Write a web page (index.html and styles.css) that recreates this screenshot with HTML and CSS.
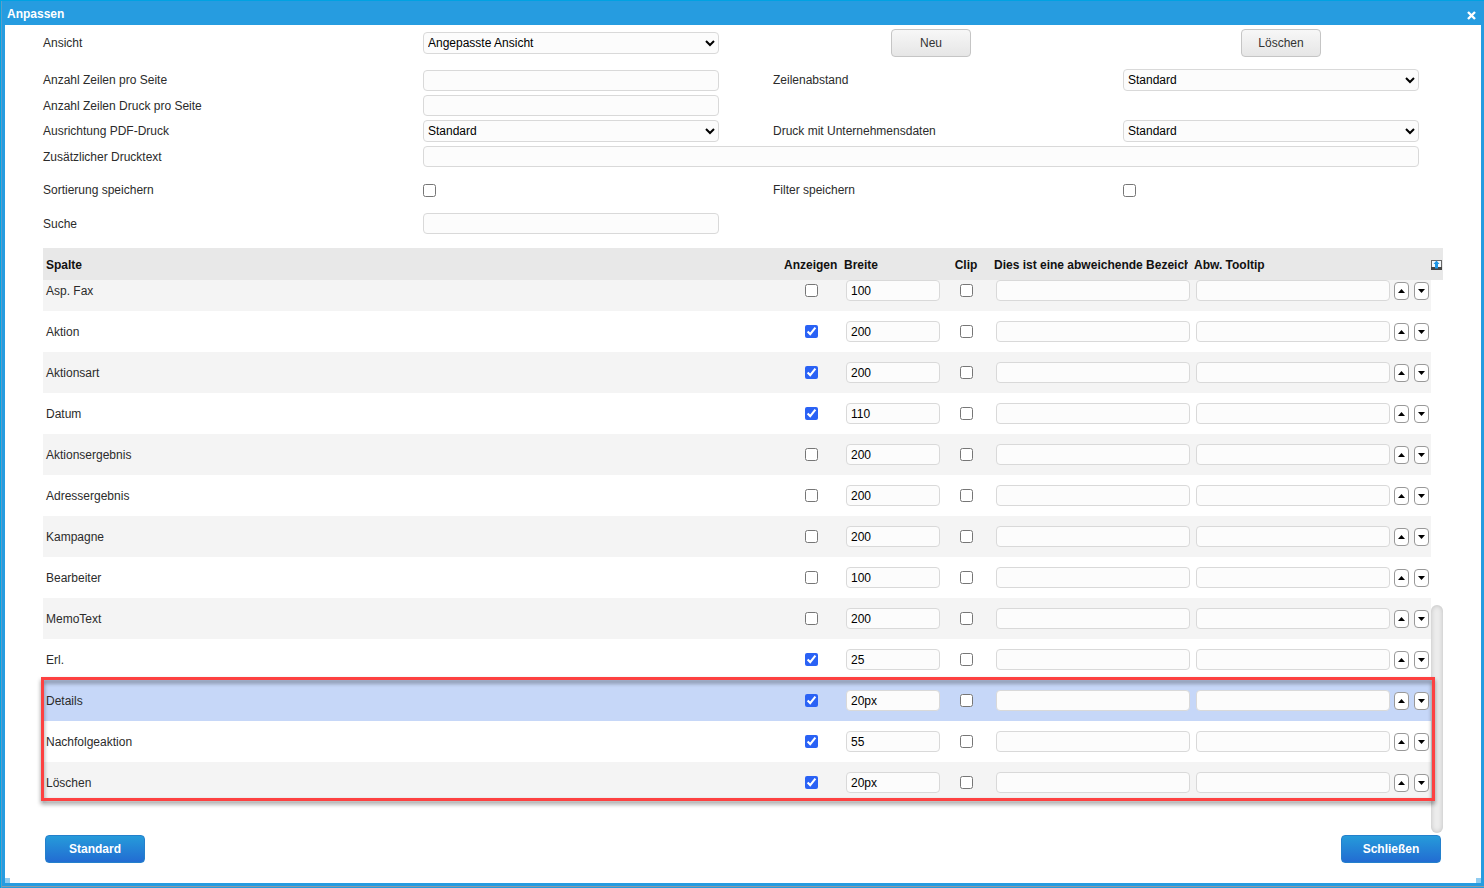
FILE: index.html
```
<!DOCTYPE html>
<html lang="de">
<head>
    <meta charset="UTF-8">
    <meta name="viewport" content="width=device-width, initial-scale=1.0">
    <title>Anpassen</title>
    <link rel="stylesheet" href="styles.css">
</head>
<body>

    <div class="dialog">
        <header class="dialog-title">
            <h1>Anpassen</h1>
            <button type="button" class="close-btn" aria-label="Fenster schließen">
                <svg width="9" height="9" viewBox="0 0 9 9"><path d="M1 1l7 7M8 1L1 8" stroke="#fff" stroke-width="2.4"/></svg>
            </button>
        </header>

        <main class="dialog-body">
            <form class="settings">
                <div class="group">
                    <label for="view">Ansicht</label>
                    <select id="view"><option>Angepasste Ansicht</option></select>
                    <div class="btn-cell"><button type="button" class="btn">Neu</button></div>
                    <div class="btn-cell"><button type="button" class="btn">Löschen</button></div>
                </div>

                <div class="group">
                    <label for="rows">Anzahl Zeilen pro Seite</label>
                    <input type="text" id="rows">
                    <label for="spacing">Zeilenabstand</label>
                    <select id="spacing"><option>Standard</option></select>

                    <label for="print-rows">Anzahl Zeilen Druck pro Seite</label>
                    <input type="text" id="print-rows">

                    <label for="orientation" class="first">Ausrichtung PDF-Druck</label>
                    <select id="orientation"><option>Standard</option></select>
                    <label for="company">Druck mit Unternehmensdaten</label>
                    <select id="company"><option>Standard</option></select>

                    <label for="print-text">Zusätzlicher Drucktext</label>
                    <input type="text" id="print-text" class="wide">
                </div>

                <div class="group checks">
                    <label for="save-sort">Sortierung speichern</label>
                    <input type="checkbox" id="save-sort">
                    <label for="save-filter">Filter speichern</label>
                    <input type="checkbox" id="save-filter">
                </div>

                <div class="group">
                    <label for="search">Suche</label>
                    <input type="text" id="search">
                </div>
            </form>

            <section class="list">
                <div class="list-scroll" id="list-scroll">
                    <table>
                        <colgroup>
                            <col>
                            <col class="col-show">
                            <col class="col-width">
                            <col class="col-clip">
                            <col class="col-text">
                            <col class="col-text">
                            <col class="col-move">
                            <col class="col-bar">
                        </colgroup>
                        <thead>
                            <tr>
                                <th><span>Spalte</span></th>
                                <th><span>Anzeigen</span></th>
                                <th><span>Breite</span></th>
                                <th class="center"><span>Clip</span></th>
                                <th><span>Dies ist eine abweichende Bezeichnung</span></th>
                                <th><span>Abw. Tooltip</span></th>
                                <th></th>
                                <th class="bar-head">
                                    <svg width="11" height="10" viewBox="0 0 11 10">
                                        <rect x="0.5" y="0.5" width="10" height="9" fill="#f4f8fb" stroke="#666"/>
                                        <rect x="0" y="7" width="11" height="3" fill="#444"/>
                                        <path d="M5.5 0.5L8.5 4H7V8.5H4V4H2.5Z" fill="#1e96e6"/>
                                    </svg>
                                </th>
                            </tr>
                        </thead>
                        <tbody id="columns"></tbody>
                    </table>
                </div>
                <div class="scroll-thumb"></div>
                <div class="marker"></div>
            </section>

            <footer class="actions">
                <button type="button" class="btn primary">Standard</button>
                <button type="button" class="btn primary">Schließen</button>
            </footer>
        </main>
    </div>

    <script src="script.js"></script>
</body>
</html>
```
FILE: styles.css
```
* {
    box-sizing: border-box;
}
body {
    margin: 0;
    font-family: "Liberation Sans", Arial, sans-serif;
    font-size: 12px;
    color: #2b2b2b;
}
button, input, select {
    font-family: inherit;
    font-size: 12px;
}
.dialog {
    display: flex;
    flex-direction: column;
    height: 100vh;
    padding: 0 3px 5px 5px;
    background-color: #269ce0;
    border-top: 1px solid #00a2e2;
    box-shadow: inset 1px 0 #00a2e2, inset 2px 0 #5c9fc9, inset 0 -1px #269ce0, inset 0 -2px #8c9aa5;
}
.dialog-title {
    display: flex;
    justify-content: space-between;
    align-items: center;
    height: 24px;
    padding: 2px 5px 0 2px;
    color: #fff;
}
.dialog-title h1 {
    margin: 0;
    font-size: 12px;
}
.close-btn {
    display: flex;
    padding: 0;
    margin-top: 2px;
    background: none;
    border: none;
    cursor: pointer;
}
.dialog-body {
    display: flex;
    flex-direction: column;
    flex: 1;
    min-height: 0;
    padding: 4px 38px 20px;
    /* resize handles in the lower corners */
    background:
        linear-gradient(#90ccf0, #90ccf0) left bottom / 5px 5px no-repeat,
        linear-gradient(#90ccf0, #90ccf0) right bottom / 5px 5px no-repeat,
        #fff;
}

/* settings */
.settings {
    display: flex;
    flex-direction: column;
    gap: 12px;
    margin-bottom: 14px;
}
.group {
    display: grid;
    grid-template-columns: 380fr 350fr 350fr 320fr;
    row-gap: 4px;
    align-items: center;
}
.group .first {
    grid-column: 1;
}
.checks {
    height: 22px;
}
input[type="text"], select {
    height: 21px;
    padding: 0 4px;
    background-color: #fcfcfc;
    border: 1px solid #d9d9d9;
    border-radius: 4px;
    color: #000;
}
select {
    height: 22px;
    padding: 0 1px 0 0;
}
.group input[type="text"], .group select {
    width: 100%;
    max-width: 296px;
    align-self: end;
}
.group select {
    align-self: center;
}
.group input.wide[type="text"] {
    grid-column: 2 / 5;
    width: auto;
    max-width: none;
    margin-right: 24px;
}
input[type="checkbox"] {
    width: 13px;
    height: 13px;
    margin: 0;
    accent-color: #2a62f5;
}
.btn-cell {
    max-width: 316px;
    text-align: center;
}
.btn {
    width: 80px;
    height: 28px;
    padding: 0;
    background: linear-gradient(#f7f7f7, #e6e6e6);
    border: 1px solid #c5c5c5;
    border-radius: 4px;
    color: #333;
    cursor: pointer;
}

/* column list */
.list {
    position: relative;
    flex: 1;
    min-height: 0;
}
.list-scroll {
    height: 100%;
    padding-bottom: 30px;
    overflow-y: auto;
    scrollbar-width: none;
}
table {
    width: 100%;
    table-layout: fixed;
    border-collapse: separate;
    border-spacing: 0;
}
.col-show {
    width: 60px;
}
.col-width {
    width: 100px;
}
.col-clip {
    width: 50px;
}
.col-text {
    width: 200px;
}
.col-move {
    width: 40px;
}
.col-bar {
    width: 12px;
}
thead th {
    position: sticky;
    top: 0;
    z-index: 1;
    height: 32px;
    padding: 2px 3px 0;
    background-color: #e8e8e8;
    color: #111;
    text-align: left;
    white-space: nowrap;
}
thead th span {
    display: block;
    overflow: hidden;
}
thead th.center {
    text-align: center;
}
thead th.bar-head {
    padding: 2px 0 0;
}
thead th svg, tbody svg {
    display: block;
}
tbody td {
    height: 41px;
    padding: 0 3px;
}
tbody tr:nth-child(odd) td:not(.bar) {
    background-color: #f4f4f4;
}
tbody tr.selected td:not(.bar) {
    background-color: #c6d7f8;
}
td.check {
    text-align: center;
}
td.check input {
    display: block;
    margin: 0 auto;
}
td.field {
    padding: 0 1px 0 5px;
}
td.field input {
    display: block;
    width: 100%;
}
td.move-cell {
    padding: 0 2px 0 3px;
}
.move {
    display: flex;
    gap: 5px;
}
.move button {
    display: flex;
    align-items: center;
    justify-content: center;
    width: 15px;
    height: 18px;
    padding: 0;
    background-color: #fff;
    border: 1px solid #999;
    border-radius: 4px;
    cursor: pointer;
}
.scroll-thumb {
    position: absolute;
    right: 0;
    bottom: 0;
    width: 12px;
    height: 228px;
    background-color: #ececec;
    border-radius: 6px;
    box-shadow: inset 0 0 5px rgba(0, 0, 0, 0.2);
}
/* frame round the last three rows */
.marker {
    position: absolute;
    left: -2px;
    right: 8px;
    bottom: 32px;
    height: 124px;
    border: 3px solid #fd4141;
    filter: drop-shadow(0 3px 2px rgba(0, 0, 0, 0.45));
    z-index: 2;
    pointer-events: none;
}

.actions {
    display: flex;
    justify-content: space-between;
    padding: 2px 2px 0;
}
.btn.primary {
    width: 100px;
    background: linear-gradient(#269bda, #226cd2);
    border-color: #2480cc;
    color: #fff;
    font-weight: bold;
}
```
FILE: script.js
```
const columns = [
    { name: 'Asp. Fax', show: false, width: '100' },
    { name: 'Aktion', show: true, width: '200' },
    { name: 'Aktionsart', show: true, width: '200' },
    { name: 'Datum', show: true, width: '110' },
    { name: 'Aktionsergebnis', show: false, width: '200' },
    { name: 'Adressergebnis', show: false, width: '200' },
    { name: 'Kampagne', show: false, width: '200' },
    { name: 'Bearbeiter', show: false, width: '100' },
    { name: 'MemoText', show: false, width: '200' },
    { name: 'Erl.', show: true, width: '25' },
    { name: 'Details', show: true, width: '20px', selected: true },
    { name: 'Nachfolgeaktion', show: true, width: '55' },
    { name: 'Löschen', show: true, width: '20px' }
];

const tbody = document.getElementById('columns');

columns.forEach(column => {
    const row = document.createElement('tr');
    if (column.selected) {
        row.classList.add('selected');
    }
    row.innerHTML = `
        <td>${column.name}</td>
        <td class="check"><input type="checkbox" aria-label="${column.name} anzeigen" ${column.show ? 'checked' : ''}></td>
        <td class="field"><input type="text" aria-label="${column.name} Breite" value="${column.width}"></td>
        <td class="check"><input type="checkbox" aria-label="${column.name} Clip"></td>
        <td class="field"><input type="text" aria-label="${column.name} Bezeichnung"></td>
        <td class="field"><input type="text" aria-label="${column.name} Tooltip"></td>
        <td class="move-cell">
            <div class="move">
                <button type="button" aria-label="${column.name} nach oben"><svg width="7" height="4" viewBox="0 0 7 4"><path d="M0 4L3.5 0L7 4Z"/></svg></button>
                <button type="button" aria-label="${column.name} nach unten"><svg width="7" height="4" viewBox="0 0 7 4"><path d="M0 0L3.5 4L7 0Z"/></svg></button>
            </div>
        </td>
        <td class="bar"></td>
    `;
    tbody.appendChild(row);
});

// start at the end of the list
const listScroll = document.getElementById('list-scroll');
listScroll.scrollTop = listScroll.scrollHeight;
```
